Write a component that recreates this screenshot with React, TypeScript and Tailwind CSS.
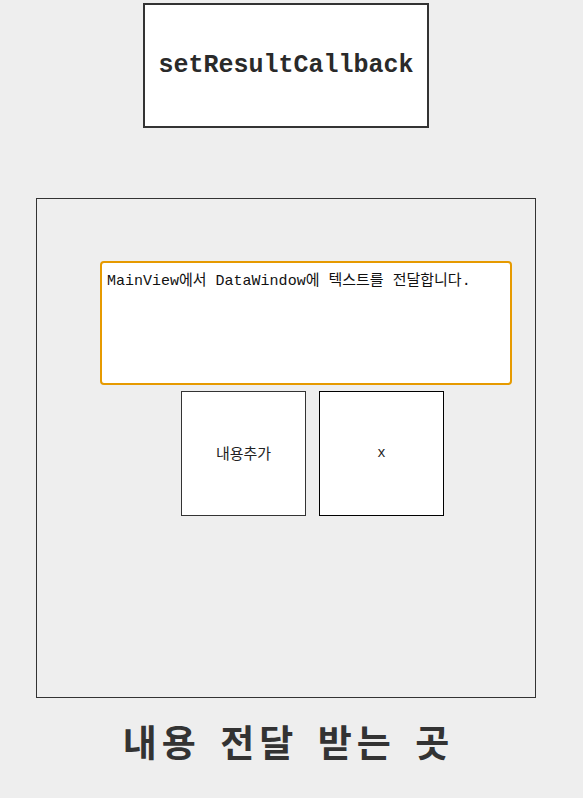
import React from "react";

export default function App() {
  return (
    <div className="w-[583px] min-h-[798px] bg-[#eeeeee] pt-[3px]">
      <div className="ml-[143px] w-[286px] h-[125px] border-2 border-[#333333] bg-white flex items-center justify-center">
        <span className="font-['Liberation_Mono',monospace] font-bold text-[25px] text-[#2a2a2a] leading-none">
          setResultCallback
        </span>
      </div>
      <div className="mt-[70px] ml-[36px] w-[500px] h-[500px] border border-[#333333]">
        <div className="mt-[62px] ml-[63px] w-[412px] h-[124px] border-2 border-[#e69a00] rounded-[4px] bg-white px-[5px] pt-[10px] font-['Liberation_Mono','Noto_Sans_CJK_KR',monospace] text-[15px] leading-[18px] text-[#111111]">
          MainView에서 DataWindow에 텍스트를 전달합니다.
        </div>
        <div className="mt-[6px] ml-[144px] flex gap-[13px]">
          <div className="w-[125px] h-[125px] border border-[#333333] bg-white flex items-center justify-center font-['Noto_Sans_CJK_KR',sans-serif] text-[15px] text-[#222222]">
            내용추가
          </div>
          <div className="w-[125px] h-[125px] border border-black bg-white flex items-center justify-center font-['Liberation_Mono',monospace] text-[14px] text-[#222222]">
            x
          </div>
        </div>
      </div>
      <div className="w-[572px] text-center mt-[19px] pl-[5px] font-['Noto_Sans_CJK_KR',sans-serif] font-bold text-[37px] tracking-[5px] [word-spacing:6px] text-[#333333] leading-[1.3]">
        내용 전달 받는 곳
      </div>
    </div>
  );
}
